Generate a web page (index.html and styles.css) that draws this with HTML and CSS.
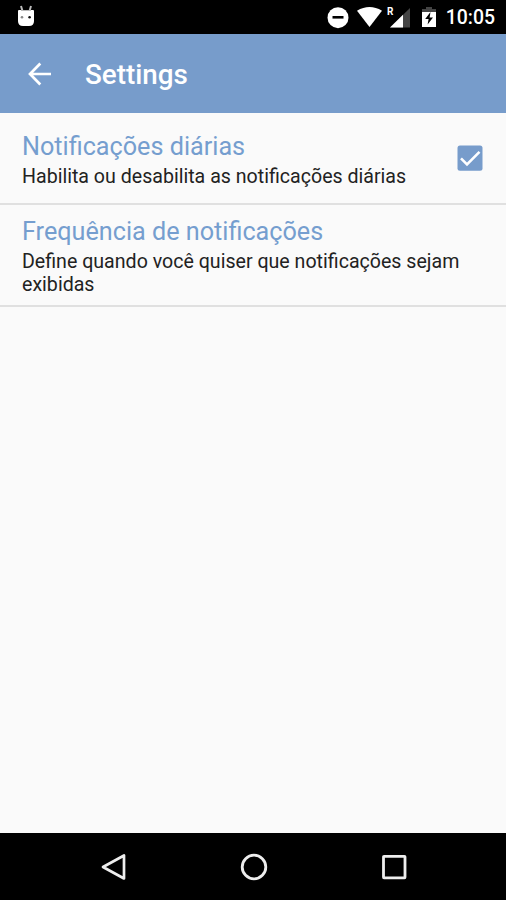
FILE: index.html
```
<!DOCTYPE html>
<html lang="pt-BR">
<head>
    <meta charset="UTF-8">
    <meta name="viewport" content="width=device-width, initial-scale=1.0">
    <title>Settings</title>
    <link rel="stylesheet" href="styles.css">
</head>
<body>

    <div class="screen">
        <!-- Barra de status -->
        <div class="status-bar">
            <svg class="icon-debug" width="18" height="22" viewBox="0 0 18 22">
                <path d="M4 1l1.500 5M14 1l-1.500 5" stroke="#bbb" stroke-width="2"/>
                <path d="M1 6q0-1 1-1h14q1 0 1 1v10q0 5-5 5H6q-5 0-5-5z" fill="#fff"/>
                <path d="M4 5.500h10" stroke="#bbb" stroke-width="1"/>
                <circle cx="5" cy="12.300" r="1.300" fill="#888"/>
                <circle cx="12.600" cy="12.300" r="1.300" fill="#111"/>
            </svg>
            <svg class="icon-status" width="90" height="34" viewBox="0 0 90 34">
                <circle cx="11" cy="17.700" r="10.500" fill="#fff"/>
                <path d="M5.500 17.300h11" stroke="#000" stroke-width="2.600"/>
                <path d="M30 10.700q12.500-7.500 25 0L42.500 27z" fill="#fff"/>
                <path d="M83 8v19.500H63z" fill="#444"/>
                <path d="M76 14.800v12.700H63z" fill="#fff"/>
            </svg>
            <span class="roaming">R</span>
            <svg class="icon-battery" width="16" height="22" viewBox="0 0 16 22">
                <path d="M5 1h6v2h4v3H1V3h4z" fill="#444"/>
                <path d="M1 6h14v15H1z" fill="#fff"/>
                <path d="M9.500 6L4.200 13h3.400l-1 5.500 5.400-7H8.600z" fill="#000"/>
            </svg>
            <span class="clock">10:05</span>
        </div>

        <!-- Barra de título -->
        <div class="toolbar">
            <svg class="icon-back" width="24" height="24" viewBox="0 0 24 24">
                <path d="M12.300 1.500L2 12l10.300 10.500M2.500 12H23" fill="none" stroke="#fff" stroke-width="2.700"/>
            </svg>
            <h1>Settings</h1>
        </div>

        <!-- Lista de preferências -->
        <div class="preferences">
            <div class="preference">
                <div class="preference-text">
                    <h2>Notificações diárias</h2>
                    <p>Habilita ou desabilita as notificações diárias</p>
                </div>
                <svg class="checkbox" width="26" height="26" viewBox="0 0 26 26">
                    <rect x="0.500" y="0.500" width="25" height="25.300" rx="2.500" fill="#779ccb"/>
                    <path d="M4 13.300l6 6L22.500 6.800" fill="none" stroke="#fff" stroke-width="2.600"/>
                </svg>
            </div>
            <div class="preference">
                <div class="preference-text">
                    <h2>Frequência de notificações</h2>
                    <p>Define quando você quiser que notificações sejam exibidas</p>
                </div>
            </div>
        </div>

        <!-- Barra de navegação -->
        <div class="nav-bar">
            <svg width="28" height="28" viewBox="0 0 28 28">
                <path d="M24 2.500v23L3 14z" fill="none" stroke="#eee" stroke-width="2.700" stroke-linejoin="round"/>
            </svg>
            <svg width="28" height="28" viewBox="0 0 28 28">
                <circle cx="14" cy="14" r="11.800" fill="none" stroke="#eee" stroke-width="2.800"/>
            </svg>
            <svg width="28" height="28" viewBox="0 0 28 28">
                <rect x="3.500" y="3.300" width="21.500" height="21.500" rx="0.500" fill="none" stroke="#eee" stroke-width="2.800"/>
            </svg>
        </div>
    </div>

</body>
</html>
```
FILE: styles.css
```
body {
    font-family: Roboto, sans-serif;
    background-color: #fafafa;
    margin: 0;
    padding: 0;
}

h1, h2, p {
    margin: 0;
}

svg {
    display: block;
    flex-shrink: 0;
}

.screen {
    display: flex;
    flex-direction: column;
    height: 900px;
    overflow: hidden;
}

.status-bar {
    position: relative;
    display: flex;
    align-items: center;
    height: 34px;
    padding-right: 11px;
    background-color: #000000;
    color: #ffffff;
}

.icon-debug {
    margin-left: 17px;
    margin-top: -2px;
}

.icon-status {
    margin-left: auto;
}

/* Letra sobreposta ao ícone de sinal */
.roaming {
    position: absolute;
    left: 387px;
    top: 6px;
    font-size: 10px;
    line-height: 12px;
    font-weight: 700;
}

.icon-battery {
    margin-left: 4px;
    margin-right: 9px;
}

.clock {
    font-size: 19.4px;
    font-weight: 500;
    line-height: 34px;
    margin-top: 2px;
}

.toolbar {
    display: flex;
    align-items: center;
    height: 79px;
    padding-left: 28px;
    background-color: #779ccb;
    color: #ffffff;
}

.toolbar h1 {
    margin-left: 33px;
    margin-top: 2px;
    font-size: 27.8px;
    font-weight: 500;
}

.preferences {
    flex: 1;
}

.preference {
    display: flex;
    align-items: center;
    justify-content: space-between;
    padding: 18px 23px 15px 22px;
    border-bottom: 2px solid #e0e0e0;
}

.preference + .preference {
    padding-top: 11px;
    padding-bottom: 9px;
}

.preference h2 {
    font-size: 25.2px;
    font-weight: 400;
    line-height: 32px;
    color: #759ecf;
}

.preference p {
    margin-top: 2px;
    font-size: 19.6px;
    line-height: 23px;
    color: #222222;
}

.checkbox {
    margin-bottom: 4px;
}

.nav-bar {
    display: flex;
    align-items: center;
    justify-content: center;
    gap: 112px;
    height: 67px;
    padding-left: 1px;
    background-color: #000000;
}
```
